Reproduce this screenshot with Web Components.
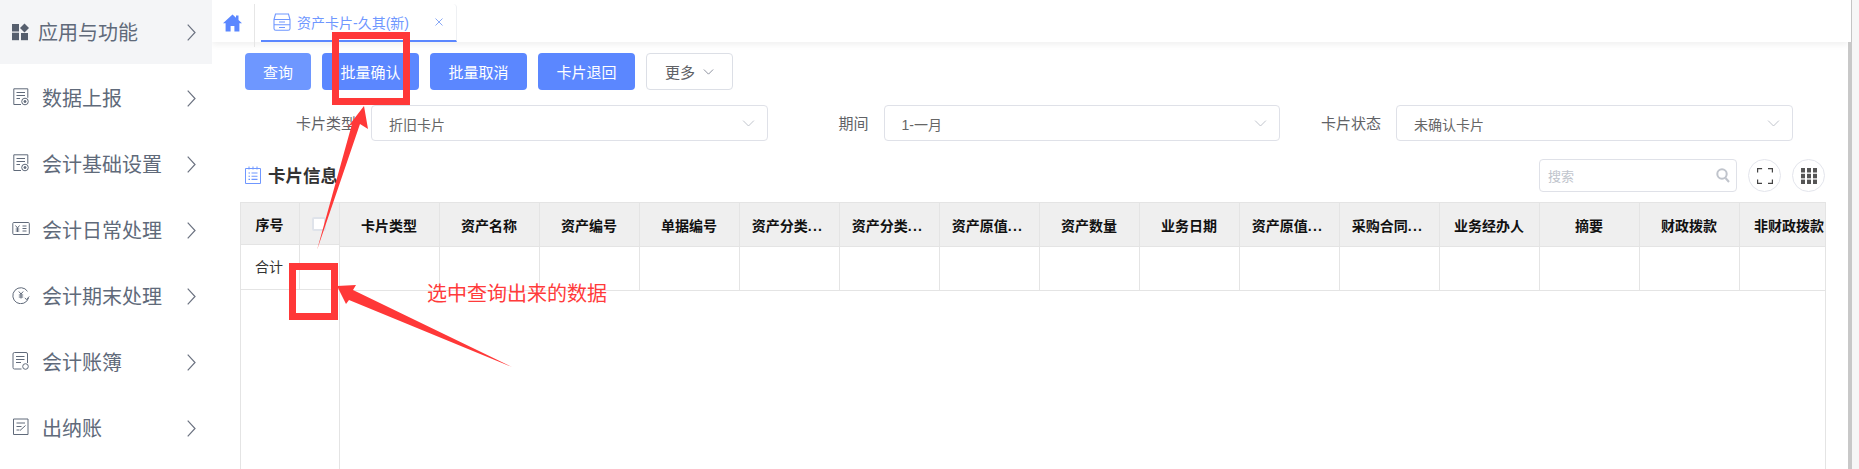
<!DOCTYPE html>
<html lang="zh">
<head>
<meta charset="utf-8">
<title>资产卡片</title>
<style>
html,body{margin:0;padding:0;background:#fff;overflow:hidden;height:469px}
body{font-family:"Liberation Sans","Noto Sans CJK SC",sans-serif;font-size:14px;color:#333}
svg{display:block}
</style>
</head>
<body>
<app-shell>
  <side-nav slot="nav">
    <nav-item active>
      <svg slot="icon" width="18" height="18" viewBox="0 0 18 18" fill="#565f6e"><rect x="0" y="1" width="7" height="7.5"/><path d="M12.5 .5l4.5 4.5-4.5 4.5L8 5z"/><rect x="0" y="9.7" width="7" height="7.5"/><rect x="9" y="10" width="7" height="7.2"/></svg>
      应用与功能
    </nav-item>
    <nav-item>
      <svg slot="icon" style="margin-top:-3px" width="18" height="18" viewBox="0 0 18 18" fill="none" stroke="#606a7a"><path d="M9 16.5H1.8V.8h14v9"/><path d="M4.500 4.500h8.500M4.500 7.500h8.500M4.500 10.500h3.500"/><circle cx="13" cy="13.500" r="3.300"/><circle cx="13" cy="13.500" r="1" fill="#606a7a"/></svg>
      数据上报
    </nav-item>
    <nav-item>
      <svg slot="icon" style="margin-top:-3px" width="18" height="18" viewBox="0 0 18 18" fill="none" stroke="#606a7a"><path d="M9 16.500H1.800V.8h14v9"/><path d="M4.500 4.500h8.500M4.500 7.500h8.500M4.500 10.500h3.500"/><circle cx="13" cy="13.500" r="3.300"/><circle cx="13" cy="13.500" r="1" fill="#606a7a"/></svg>
      会计基础设置
    </nav-item>
    <nav-item>
      <svg slot="icon" style="margin-top:-3px" width="18" height="18" viewBox="0 0 18 18" fill="none" stroke="#606a7a"><rect x=".8" y="2.500" width="16.500" height="12" rx="1"/><path d="M3.500 5.500l2 2.500 2-2.500M5.500 8v4M3.700 9h3.600M3.700 11h3.600M10.500 6h4M10.500 8.500h4M10.500 11h4"/></svg>
      会计日常处理
    </nav-item>
    <nav-item>
      <svg slot="icon" style="margin-top:-3px" width="18" height="18" viewBox="0 0 18 18" fill="none" stroke="#606a7a"><path d="M15.500 5.300A8 8 0 1 0 16.500 12"/><path d="M6.800 5.500L9 8l2.200-2.500M9 8v4.500M6.800 9h4.400M6.800 11h4.400" /><path d="M12.800 12l1.700 1.500 2.700-3"/></svg>
      会计期末处理
    </nav-item>
    <nav-item>
      <svg slot="icon" style="margin-top:-3px" width="18" height="18" viewBox="0 0 18 18" fill="none" stroke="#606a7a"><path d="M9.500 17H2.500a1.500 1.500 0 0 1-1.500-1.500V2A1.500 1.500 0 0 1 2.500.5h11.500A1.500 1.500 0 0 1 15.500 2v9"/><path d="M4 4.500h8.500M4 7.500h8.500M4 10.500h5"/><circle cx="13.500" cy="14.500" r="2.800"/></svg>
      会计账簿
    </nav-item>
    <nav-item>
      <svg slot="icon" style="margin-top:-3px" width="18" height="18" viewBox="0 0 18 18" fill="none" stroke="#606a7a"><path d="M1.500 1h14.500v15.500H1.500z"/><path d="M4.500 5h8.500M4.500 8.500h5M4.500 12h3M8 12.500l5.500-5"/></svg>
      出纳账
    </nav-item>
  </side-nav>
  <tab-bar slot="tabs" title-text="资产卡片-久其(新)"></tab-bar>
  <tool-bar slot="main">
    <ui-button kind="soft" w="66">查询</ui-button>
    <ui-button kind="primary" w="97">批量确认</ui-button>
    <ui-button kind="primary" w="97">批量取消</ui-button>
    <ui-button kind="primary" w="97">卡片退回</ui-button>
    <ui-button kind="plain" w="87" caret>更多</ui-button>
  </tool-bar>
  <filter-row slot="main">
    <filter-field label="卡片类型" value="折旧卡片"></filter-field>
    <filter-field label="期间" value="1-一月"></filter-field>
    <filter-field label="卡片状态" value="未确认卡片"></filter-field>
  </filter-row>
  <section-head slot="main" title-text="卡片信息"></section-head>
  <data-table slot="main"></data-table>
  <red-notes slot="notes"></red-notes>
</app-shell>

<script>
function shadow(el, html){ const r = el.attachShadow({mode:'open'}); r.innerHTML = html; return r; }
const chevronDown = (c,w,h)=>`<svg width="${w}" height="${h}" viewBox="0 0 12 7" fill="none" stroke="${c}" stroke-width="1"><path d="M.6.6L6 6 11.400.6"/></svg>`;

customElements.define('app-shell', class extends HTMLElement{
  connectedCallback(){ shadow(this, `<style>
    :host{display:flex;position:relative;width:1859px;height:469px;overflow:hidden;background:#fff}
    .nav{flex:0 0 212px}
    .page{flex:1 1 auto;min-width:0;display:flex;flex-direction:column;height:469px;overflow:hidden}
    .scroll{flex:0 0 11px;display:flex;height:469px}
    .track{flex:0 0 4px;display:flex;flex-direction:column}
    .track i{flex:0 0 42px;border-right:1px solid #c4c4c4;box-sizing:border-box}
    .track b{flex:1;background:#c8c8c8}
    .rest{flex:1;background:#f6f6f6}
    </style>
    <div class="nav"><slot name="nav"></slot></div>
    <div class="page"><slot name="tabs"></slot><slot name="main"></slot></div>
    <div class="scroll"><div class="track"><i></i><b></b></div><div class="rest"></div></div>
    <slot name="notes"></slot>`); }
});

customElements.define('side-nav', class extends HTMLElement{
  connectedCallback(){ shadow(this, `<style>:host{display:flex;flex-direction:column;gap:2px;width:212px}</style><slot></slot>`); }
});

customElements.define('nav-item', class extends HTMLElement{
  connectedCallback(){
    shadow(this, `<style>
    :host{display:flex;align-items:center;height:64px;padding:0 16px 0 12px;box-sizing:border-box;font-size:20px;color:#606a7a;gap:12px}
    :host([active]){background:#f4f5f7;gap:8px}
    .t{flex:1;white-space:nowrap;margin-top:-2px}
    </style><slot name="icon"></slot><span class="t"><slot></slot></span>
    <svg width="9" height="17" viewBox="0 0 9 17" fill="none" stroke="#6b7280" stroke-width="1.200"><path d="M.7.7L8 8.500.7 16.300"/></svg>`);
  }
});

customElements.define('tab-bar', class extends HTMLElement{
  connectedCallback(){
    shadow(this, `<style>
    :host{display:flex;flex:0 0 42px;height:42px;background:#fff;box-shadow:0 3px 6px rgba(0,0,0,.06);position:relative;box-sizing:border-box}
    .home{flex:0 0 40px;display:flex;align-items:center;justify-content:center;height:42px;padding-top:3px;box-sizing:border-box}
    .div{width:1px;height:43px;margin:4px 0 0 2px;background:#e6e6e6;flex:none}
    .tab{margin-left:6px;width:196px;margin-top:4px;border-bottom:2px solid #5b87ff;border-right:1px solid #eef0f3;border-top-right-radius:4px;display:flex;align-items:center;color:#6f97ff;font-size:14px;box-sizing:border-box;height:38px}
    .ic{margin-left:12px;margin-right:6px}
    .x{margin-left:26px;width:8px}
    </style>
    <div class="home"><svg width="19" height="18" viewBox="0 0 19 18" fill="#5b87ff"><path d="M9.500.5L0 9.300h2.600V17.500h5V12h3.800v5.500h5V9.300H19l-3.500-3.200V1.500h-2.500v2.300z"/></svg></div>
    <div class="div"></div>
    <div class="tab">
      <svg class="ic" width="18" height="18" viewBox="0 0 18 18" fill="none" stroke="#6f97ff" stroke-width="1.100"><path d="M1 6.500L2.500 1h13L17 6.500v9a1.800 1.800 0 0 1-1.800 1.800H2.800A1.800 1.800 0 0 1 1 15.500zM1 6.500h16M1 11.800h16M6 9h6M6 14.500h6"/></svg>
      <span>${this.getAttribute('title-text')}</span>
      <svg class="x" width="8" height="8" viewBox="0 0 8 8" stroke="#8aa9f5" fill="none"><path d="M.5.500l7 7M7.500.500l-7 7"/></svg>
    </div>`);
  }
});

customElements.define('tool-bar', class extends HTMLElement{
  connectedCallback(){ shadow(this, `<style>:host{display:flex;gap:11px;margin:11px 0 0 33px;flex:none}</style><slot></slot>`); }
});

customElements.define('ui-button', class extends HTMLElement{
  connectedCallback(){
    const k=this.getAttribute('kind'), w=this.getAttribute('w');
    const bg={soft:'#6e97ff',primary:'#5b87ff',plain:'#fff'}[k];
    shadow(this, `<style>
    :host{display:flex;align-items:center;justify-content:center;gap:8px;width:${w}px;height:37px;box-sizing:border-box;border-radius:4px;background:${bg};color:${k==='plain'?'#606266':'#fff'};font-size:15px;${k==='plain'?'border:1px solid #dcdfe6;':''}}
    </style><slot></slot>${this.hasAttribute('caret')?chevronDown('#7b8190',11,6):''}`);
  }
});

customElements.define('filter-row', class extends HTMLElement{
  connectedCallback(){ shadow(this, `<style>:host{display:grid;grid-template-columns:repeat(3,512.5px);margin:15px 0 0 43px;flex:none}</style><slot></slot>`); }
});

customElements.define('filter-field', class extends HTMLElement{
  connectedCallback(){
    shadow(this, `<style>
    :host{display:flex;align-items:center;height:36px}
    label{flex:0 0 101px;padding-right:15px;text-align:right;font-size:15px;color:#606266;margin-top:-2px}
    .sel{flex:0 0 396.5px;height:36px;box-sizing:border-box;border:1px solid #dfe1e8;border-radius:4px;display:flex;align-items:center;justify-content:space-between;padding:0 12px 0 17px;font-size:14px;color:#666}
    .sel span{padding-top:2px}
    </style><label>${this.getAttribute('label')}</label>
    <div class="sel"><span>${this.getAttribute('value')}</span>${chevronDown('#c0c4cc',13,7)}</div>`);
  }
});

customElements.define('section-head', class extends HTMLElement{
  connectedCallback(){
    shadow(this, `<style>
    :host{display:flex;align-items:center;height:33px;margin:18px 33px 10px 33px;flex:none;width:1580px}
    .ic{margin-right:7px;margin-top:-2px}
    h2{margin:-2px 0 0 0;font-size:17.500px;font-weight:700;color:#333;flex:1}
    .search{width:198px;height:33px;box-sizing:border-box;border:1px solid #dfe1e8;border-radius:4px;display:flex;align-items:center;justify-content:space-between;padding:0 6px 0 8px;color:#c0c4cc;font-size:13px}
    .round{width:33px;height:33px;box-sizing:border-box;border:1px solid #e3e5ec;border-radius:50%;display:flex;align-items:center;justify-content:center;margin-left:11px;background:#fff}
    </style>
    <svg class="ic" width="16" height="18" viewBox="0 0 16 18" fill="none" stroke="#6f97ff" stroke-width="1"><path d="M.5 2.500h15v15H.5zM4 .5v3M8 .5v3M12 .5v3"/><path d="M3.500 7h1.500M6.500 7h6M3.500 10.200h1.500M6.500 10.200h6M3.500 13.400h1.500M6.500 13.400h6" stroke-width="1.100"/></svg>
    <h2>${this.getAttribute('title-text')}</h2>
    <div class="search"><span>搜索</span><svg width="14" height="15" viewBox="0 0 14 15" fill="none" stroke="#c0c4cc" stroke-width="2"><circle cx="6" cy="6" r="4.700"/><path d="M9.500 10l3.500 4"/></svg></div>
    <div class="round"><svg width="16" height="16" viewBox="0 0 16 16" fill="none" stroke="#444" stroke-width="1.200"><path d="M.6 4.500V.6h4.500M11 .6h4.400v3.900M15.400 11.500v3.900H11M5 15.400H.6v-3.900"/></svg></div>
    <div class="round"><svg width="16" height="16" viewBox="0 0 16 16" fill="#555"><rect x="0" y="0" width="4" height="4.500"/><rect x="6" y="0" width="4" height="4.500"/><rect x="12" y="0" width="4" height="4.500"/><rect x="0" y="5.800" width="4" height="4.500"/><rect x="6" y="5.800" width="4" height="4.500"/><rect x="12" y="5.800" width="4" height="4.500"/><rect x="0" y="11.600" width="4" height="4.500"/><rect x="6" y="11.600" width="4" height="4.500"/><rect x="12" y="11.600" width="4" height="4.500"/></svg></div>`);
  }
});

customElements.define('data-table', class extends HTMLElement{
  connectedCallback(){
    const cols=['卡片类型','资产名称','资产编号','单据编号','资产分类...','资产分类...','资产原值...','资产数量','业务日期','资产原值...','采购合同...','业务经办人','摘要','财政拨款','非财政拨款'];
    const head=cols.map(c=>{
      const m=c.match(/^(.*)\.\.\.$/);
      return m?`<div class="th ell"><span>${m[1]}<span class="dots">...</span></span></div>`:`<div class="th">${c}</div>`;
    }).join('');
    const body=cols.map(()=>`<div class="td"></div>`).join('');
    shadow(this, `<style>
    :host{display:flex;flex:1 1 auto;margin-left:28px;width:1586px;box-sizing:border-box;border-left:1px solid #e4e4e4;border-right:1px solid #e4e4e4;border-top:1px solid #e4e4e4;overflow:hidden;font-size:14px;min-height:0}
    .fixed{flex:0 0 98px;display:flex;flex-direction:column;border-right:1px solid #e4e4e4}
    .main{flex:1;min-width:0;overflow:hidden}
    .row{display:flex;box-sizing:border-box;border-bottom:1px solid #e4e4e4}
    .fixed .row{height:42px}
    .fixed .row.b{height:45px}
    .main .row{width:1500px;height:44px}
    .h{background:#efefef}
    .th,.td{flex:0 0 100px;box-sizing:border-box;border-right:1px solid #e4e4e4;display:flex;align-items:center;justify-content:center;white-space:nowrap;padding-right:1px}
    .th{font-weight:700;color:#111}
    .th.ell{padding-right:4px}
    .dots{letter-spacing:1.300px}
    .fixed .seq{flex:0 0 59px}
    .fixed .chk{flex:0 0 39px;border-right:0}
    .td.seq{color:#333;padding:0 2px 2px 0}
    .box{width:14px;height:14px;box-sizing:border-box;border:2px solid #dfe3ea;border-radius:2px;background:#fff}
    </style>
    <div class="fixed">
      <div class="row h"><div class="th seq">序号</div><div class="th chk"><span class="box"></span></div></div>
      <div class="row b"><div class="td seq">合计</div><div class="td chk"></div></div>
    </div>
    <div class="main">
      <div class="row h">${head}</div>
      <div class="row b">${body}</div>
    </div>`);
  }
});

customElements.define('red-notes', class extends HTMLElement{
  connectedCallback(){
    shadow(this, `<style>
    :host{position:absolute;left:0;top:0;width:1859px;height:469px;pointer-events:none}
    svg{position:absolute;left:0;top:0}
    .frame{position:absolute;box-sizing:border-box;border:7px solid #ff3838}
    .f1{left:332px;top:32px;width:78px;height:73px}
    .f2{left:289px;top:263px;width:49px;height:57px}
    .msg{position:absolute;left:427px;top:280px;font-size:20px;line-height:28px;color:#ff3b3b;white-space:nowrap}
    </style>
    <div class="frame f1"></div>
    <div class="frame f2"></div>
    <svg width="1859" height="469" viewBox="0 0 1859 469" fill="#ff3838">
      <polygon points="364,106 368,129 360,124 317,250 352,124 347,128"/>
      <polygon points="337,286 356,285 353,290 512,367 349,300 346,304"/>
    </svg>
    <div class="msg">选中查询出来的数据</div>`);
  }
});
</script>
</body>
</html>
